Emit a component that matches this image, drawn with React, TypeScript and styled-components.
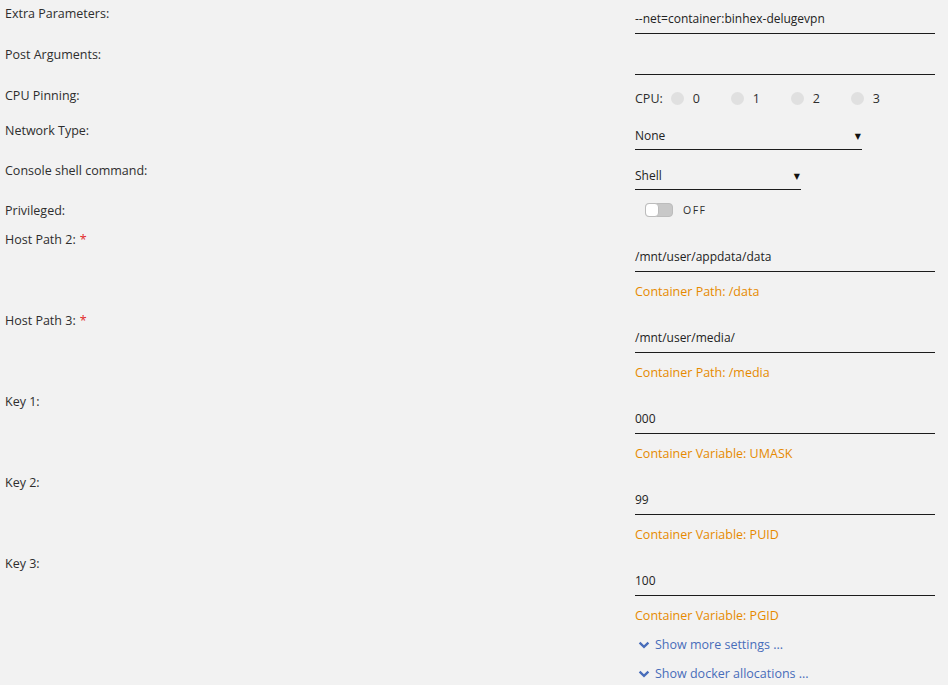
import styled, { createGlobalStyle } from "styled-components";

const GlobalStyle = createGlobalStyle`
  html, body {
    margin: 0;
    padding: 0;
    background: #f2f2f2;
  }
  body {
    font-family: "Open Sans", "DejaVu Sans", sans-serif;
    font-size: 12.5px;
    color: #2e2e2e;
  }
`;

const Page = styled.div`
  width: 948px;
  height: 685px;
  overflow: hidden;
  padding-left: 5px;
  box-sizing: border-box;
`;

const Row = styled.div<{ $height: number }>`
  display: grid;
  grid-template-columns: 630px 300px;
  align-items: start;
  height: ${(p) => p.$height}px;
  padding-top: 5px;
  box-sizing: border-box;
`;

const Label = styled.div`
  line-height: 18px;
  color: #2e2e2e;
`;

const Required = styled.span`
  color: #e22828;
  margin-left: 4px;
`;

const Field = styled.div`
  display: flex;
  flex-direction: column;
  padding-top: 12px;
`;

const TextInput = styled.div<{ $width?: number; $height?: number }>`
  width: ${(p) => p.$width ?? 300}px;
  height: ${(p) => p.$height ?? 29}px;
  margin-top: -1px;
  border-bottom: 1px solid #1c1c1c;
  display: flex;
  align-items: center;
  justify-content: space-between;
  font-size: 12px;
  color: #222;
`;

const Caret = styled.span`
  font-size: 8px;
  color: #111;
  margin-right: 1px;
`;

const Description = styled.div`
  margin-top: 11px;
  line-height: 18px;
  color: #e68a00;
`;

const CpuLine = styled.div`
  display: flex;
  align-items: center;
  height: 22px;
`;

const CpuLabel = styled.span`
  margin-right: 8px;
`;

const CpuItem = styled.span`
  display: flex;
  align-items: center;
  width: 60px;
  gap: 9px;
`;

const CpuDot = styled.span`
  width: 13px;
  height: 13px;
  border-radius: 50%;
  background: #e0e0e0;
`;

const ToggleLine = styled.div`
  display: flex;
  align-items: center;
  height: 16px;
  padding-left: 10px;
  gap: 10px;
`;

const Switch = styled.span`
  position: relative;
  width: 26px;
  height: 12px;
  border-radius: 4px;
  background: #c8c8c8;
  border: 1px solid #bcbcbc;

  &::after {
    content: "";
    position: absolute;
    left: -1px;
    top: -1px;
    width: 12px;
    height: 12px;
    border-radius: 4px;
    background: #fff;
    border: 1px solid #bcbcbc;
  }
`;

const ToggleText = styled.span`
  font-size: 10.5px;
  letter-spacing: 1.5px;
`;

const Links = styled.div`
  display: grid;
  grid-template-columns: 630px 300px;
  padding-top: 5px;
`;

const LinkList = styled.div`
  display: flex;
  flex-direction: column;
  gap: 11px;
`;

const MoreLink = styled.a`
  display: flex;
  align-items: center;
  gap: 5px;
  padding-left: 3px;
  line-height: 18px;
  color: #486dba;
  text-decoration: none;
`;

const Chevron = () => (
  <svg width="12" height="9" viewBox="0 0 12 9">
    <path d="M0.8 2.4 L2.4 0.8 L6 4.3 L9.6 0.8 L11.2 2.4 L6 7.5 Z" fill="#486dba" />
  </svg>
);

const cpus = [0, 1, 2, 3];

const paths = [
  { label: "Host Path 2:", value: "/mnt/user/appdata/data", note: "Container Path: /data", required: true },
  { label: "Host Path 3:", value: "/mnt/user/media/", note: "Container Path: /media", required: true },
  { label: "Key 1:", value: "000", note: "Container Variable: UMASK" },
  { label: "Key 2:", value: "99", note: "Container Variable: PUID" },
  { label: "Key 3:", value: "100", note: "Container Variable: PGID" },
];

export default function App() {
  return (
    <Page>
      <GlobalStyle />
      <Row $height={41}>
        <Label>Extra Parameters:</Label>
        <TextInput>--net=container:binhex-delugevpn</TextInput>
      </Row>
      <Row $height={41}>
        <Label>Post Arguments:</Label>
        <TextInput />
      </Row>
      <Row $height={35}>
        <Label>CPU Pinning:</Label>
        <CpuLine>
          <CpuLabel>CPU:</CpuLabel>
          {cpus.map((c) => (
            <CpuItem key={c}>
              <CpuDot />
              {c}
            </CpuItem>
          ))}
        </CpuLine>
      </Row>
      <Row $height={40}>
        <Label>Network Type:</Label>
        <TextInput $width={227} $height={28}>
          None <Caret>▼</Caret>
        </TextInput>
      </Row>
      <Row $height={40}>
        <Label>Console shell command:</Label>
        <TextInput $width={166} $height={28}>
          Shell <Caret>▼</Caret>
        </TextInput>
      </Row>
      <Row $height={29}>
        <Label>Privileged:</Label>
        <ToggleLine>
          <Switch />
          <ToggleText>OFF</ToggleText>
        </ToggleLine>
      </Row>
      {paths.map((p) => (
        <Row $height={81} key={p.label}>
          <Label>
            {p.label}
            {p.required && <Required>*</Required>}
          </Label>
          <Field>
            <TextInput>{p.value}</TextInput>
            <Description>{p.note}</Description>
          </Field>
        </Row>
      ))}
      <Links>
        <span />
        <LinkList>
          <MoreLink href="#">
            <Chevron />
            Show more settings ...
          </MoreLink>
          <MoreLink href="#">
            <Chevron />
            Show docker allocations ...
          </MoreLink>
        </LinkList>
      </Links>
    </Page>
  );
}
